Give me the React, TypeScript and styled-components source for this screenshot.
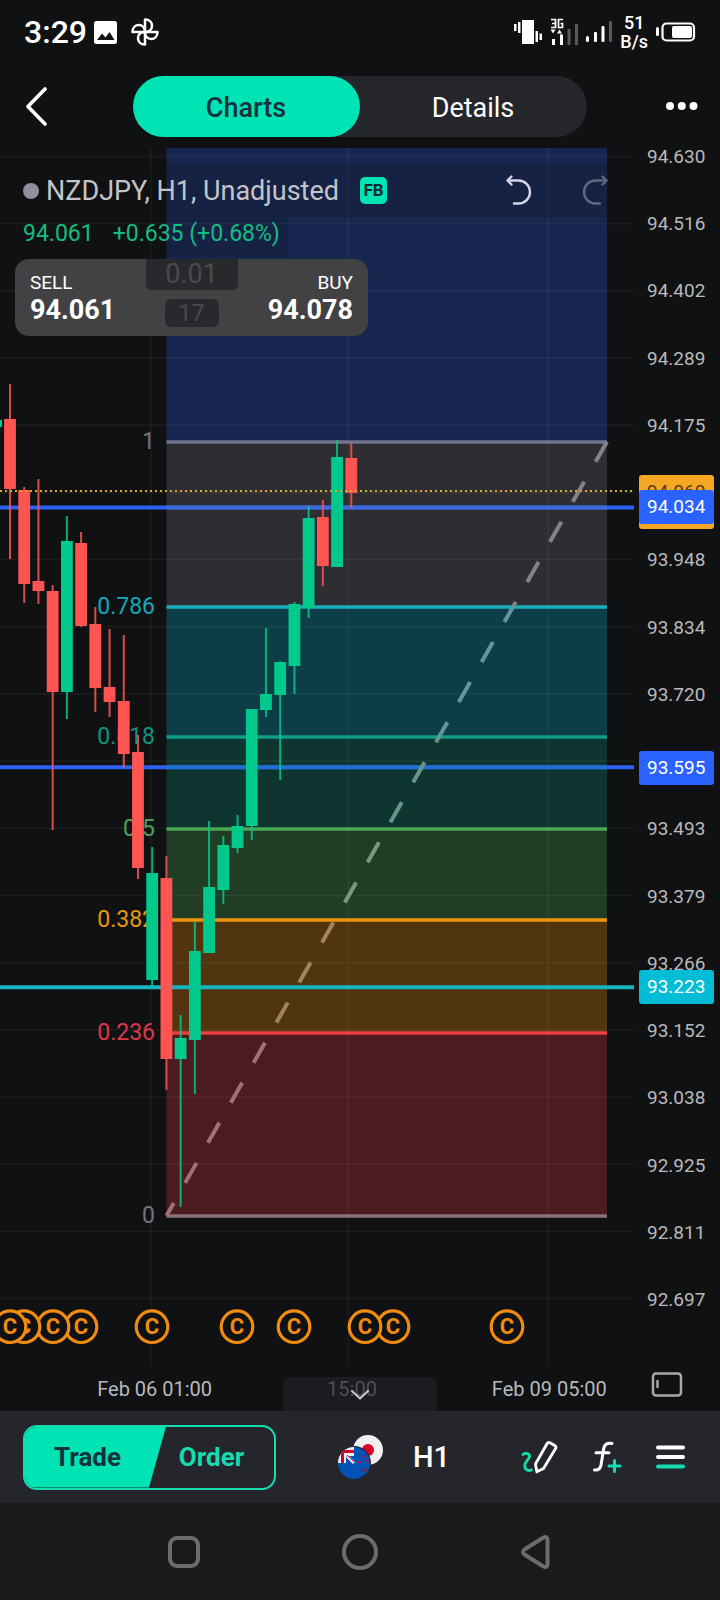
import React from "react";
import styled, { createGlobalStyle } from "styled-components";

const GlobalStyle = createGlobalStyle`
  *, *::before, *::after { box-sizing: border-box; }
  body {
    margin: 0;
    background: #101113;
    color: #fff;
    font-family: Roboto, "Liberation Sans", sans-serif;
  }
  button {
    margin: 0;
    padding: 0;
    border: 0;
    background: none;
    color: inherit;
    font: inherit;
    cursor: pointer;
  }
  svg { display: block; flex: none; }
`;

const Screen = styled.div`
  display: flex;
  flex-direction: column;
  min-height: 100vh;
  background: #101113;
`;

/* Status bar */

const StatusBar = styled.div`
  display: flex;
  align-items: center;
  justify-content: space-between;
  height: 64px;
  padding: 0 24px;
`;

const StatusGroup = styled.div<{ $gap: number }>`
  display: flex;
  align-items: center;
  gap: ${(p) => p.$gap}px;
`;

const Clock = styled.span`
  font-size: 32px;
  line-height: 36px;
  font-weight: 500;
  margin-right: -7px;
`;

const NetSpeed = styled.span`
  font-size: 18px;
  line-height: 19px;
  font-weight: 500;
  text-align: center;
`;

/* Header */

const Header = styled.header`
  display: flex;
  align-items: flex-start;
  justify-content: space-between;
  height: 80px;
  padding: 12px 22px 0 24px;
`;

const IconButton = styled.button<{ $height?: number; $width?: number }>`
  display: flex;
  align-items: center;
  width: ${(p) => (p.$width ? `${p.$width}px` : "auto")};
  height: ${(p) => p.$height ?? 60}px;
`;

const Tabs = styled.div`
  display: flex;
  width: 454px;
  height: 61px;
  border-radius: 31px;
  background: #25262c;
`;

const Tab = styled.button<{ $active?: boolean }>`
  flex: 1;
  padding-top: 2px;
  border-radius: 31px;
  background: ${(p) => (p.$active ? "#00e3b5" : "transparent")};
  color: ${(p) => (p.$active ? "#12323c" : "#fff")};
  font-size: 27px;
  font-weight: ${(p) => (p.$active ? 500 : 400)};
`;

/* Chart */

const ChartArea = styled.main`
  position: relative;
  display: flex;
`;

const Plot = styled.div`
  flex: 1;
  min-width: 0;

  svg { width: 100%; height: 1221px; }
`;

const PriceAxis = styled.div`
  position: relative;
  display: flex;
  flex-direction: column;
  justify-content: space-between;
  width: 86px;
  height: 1168px;
  padding: 1px 0 0 13px;
  color: #b9b9bb;
  font-size: 19px;
  line-height: 24px;
`;

const PriceTag = styled.div<{ $top: number; $color: string; $height?: number }>`
  position: absolute;
  left: 5px;
  top: ${(p) => p.$top}px;
  width: 75px;
  height: ${(p) => p.$height ?? 34}px;
  padding: 5px 0 0 8px;
  border-radius: 3px;
  background: ${(p) => p.$color};
  color: ${(p) => (p.$height ? "#5a3c10" : "#fff")};
`;

const Legend = styled.div`
  position: absolute;
  top: 20px;
  left: 0;
  right: 86px;
`;

const LegendRow = styled.div`
  display: flex;
  align-items: center;
  height: 53px;
  margin-right: 26px;
  padding-left: 23px;
  background: rgba(16, 17, 19, 0.17);
`;

const Dot = styled.span`
  width: 16px;
  height: 16px;
  margin-right: 7px;
  border-radius: 50%;
  background: #8f919e;
`;

const SymbolName = styled.span`
  color: #c3c4c9;
  font-size: 27px;
  line-height: 32px;
`;

const Badge = styled.span`
  width: 27px;
  height: 27px;
  margin-left: 21px;
  border-radius: 5px;
  background: #00e3b5;
  color: #0a2a30;
  font-size: 17px;
  line-height: 27px;
  font-weight: 700;
  text-align: center;
`;

const HistoryButtons = styled.div`
  display: flex;
  gap: 50px;
  margin: 0 -1px 0 auto;
`;

const Quote = styled.div`
  display: inline-flex;
  gap: 19px;
  height: 40px;
  padding: 3px 8px 0 23px;
  background: rgba(16, 17, 19, 0.17);
  color: #12bd82;
  font-size: 23px;
  line-height: 28px;
`;

const OrderTicket = styled.div`
  position: absolute;
  top: 115px;
  left: 15px;
  display: flex;
  justify-content: space-between;
  width: 353px;
  height: 77px;
  border-radius: 14px;
  background: #424245;
`;

const Side = styled.button<{ $end?: boolean }>`
  display: flex;
  flex-direction: column;
  align-items: ${(p) => (p.$end ? "flex-end" : "flex-start")};
  width: 120px;
  padding: 12px 15px 0;
`;

const SideLabel = styled.span`
  font-size: 19px;
  line-height: 24px;
`;

const SidePrice = styled.span`
  font-size: 27px;
  line-height: 30px;
  font-weight: 700;
`;

const TicketMiddle = styled.div`
  display: flex;
  flex-direction: column;
  align-items: center;
  gap: 9px;
  color: #4a4a4d;
`;

const Lot = styled.span`
  width: 92px;
  height: 31px;
  border-radius: 0 0 6px 6px;
  background: #28292c;
  font-size: 27px;
  line-height: 31px;
  text-align: center;
`;

const Spread = styled.span`
  width: 54px;
  height: 28px;
  border-radius: 6px;
  background: #28292c;
  font-size: 23px;
  line-height: 30px;
  text-align: center;
`;

const TimeAxis = styled.div`
  position: relative;
  display: flex;
  height: 46px;
  padding-left: 56px;
  color: #b9b9bb;
  font-size: 20px;
  line-height: 24px;
`;

const TimeLabel = styled.span`
  flex: 1;
  padding-top: 12px;
  text-align: center;
`;

const AxisModeButton = styled.button`
  display: flex;
  width: 72px;
  padding: 7px 0 0 3px;
`;

const DrawerHandle = styled.button`
  position: absolute;
  left: 50%;
  bottom: 0;
  display: flex;
  justify-content: center;
  width: 154px;
  height: 34px;
  margin-left: -77px;
  padding-top: 12px;
  border-radius: 6px 6px 0 0;
  background: rgba(32, 33, 38, 0.7);
`;

/* Toolbar */

const Toolbar = styled.div`
  display: flex;
  align-items: center;
  height: 92px;
  padding: 0 35px 0 23px;
  background: #25262c;
`;

const TradeSwitch = styled.div`
  display: flex;
  width: 253px;
  height: 65px;
  border: 2px solid #14dcb0;
  border-radius: 14px;
  overflow: hidden;
  font-size: 26px;
  font-weight: 700;
`;

const TradeButton = styled.button`
  width: 141px;
  margin-right: -17px;
  padding-right: 16px;
  background: #00e3b5;
  clip-path: polygon(0 0, 100% 0, 124px 100%, 0 100%);
  color: #12323c;
`;

const OrderButton = styled.button`
  flex: 1;
  color: #14dcb0;
`;

const FlagButton = styled.button`
  margin-left: 61px;
`;

const IntervalButton = styled.button`
  margin: 0 auto 0 28px;
  font-size: 29px;
  font-weight: 500;
`;

const Tools = styled.div`
  display: flex;
  align-items: center;
  gap: 34px;
`;

/* System navigation */

const SystemNav = styled.nav`
  display: flex;
  flex: 1;
  align-items: center;
  justify-content: center;
  gap: 136px;
  min-height: 97px;
  background: #1a1a1a;
`;

/* Data */

type Candle = [high: number, top: number, bottom: number, low: number, up: 0 | 1];

const candles: Candle[] = [
  [384, 419, 489, 559, 0],
  [487, 490, 584, 603, 0],
  [479, 581, 591, 604, 0],
  [585, 591, 692, 830, 0],
  [516, 541, 692, 719, 1],
  [532, 543, 626, 627, 0],
  [607, 624, 688, 712, 0],
  [629, 687, 702, 717, 0],
  [635, 701, 754, 768, 0],
  [735, 752, 868, 879, 0],
  [847, 873, 980, 986, 1],
  [856, 878, 1059, 1090, 0],
  [1015, 1038, 1059, 1207, 1],
  [922, 951, 1040, 1094, 1],
  [821, 887, 953, 953, 1],
  [836, 845, 890, 904, 1],
  [815, 826, 848, 853, 1],
  [709, 709, 826, 840, 1],
  [628, 694, 710, 717, 1],
  [661, 662, 695, 780, 1],
  [602, 604, 666, 694, 1],
  [506, 518, 608, 618, 1],
  [500, 517, 566, 586, 0],
  [440, 457, 567, 567, 1],
  [443, 458, 493, 508, 0],
];

const zones = [
  { from: 148, to: 442, fill: "#17264f", trend: "#828288" },
  { from: 442, to: 607, fill: "#2d2d32", trend: "#828288" },
  { from: 607, to: 737, fill: "#0c3e47", trend: "#6394a0" },
  { from: 737, to: 829, fill: "#0f3531", trend: "#66958a" },
  { from: 829, to: 920, fill: "#223d26", trend: "#7b977c" },
  { from: 920, to: 1033, fill: "#513510", trend: "#a48558" },
  { from: 1033, to: 1216, fill: "#4c1b20", trend: "#a06f78" },
];

const levels = [
  { y: 442, label: "1", line: "#70748e", text: "#73757d" },
  { y: 607, label: "0.786", line: "#1aaebc", text: "#14a9b9" },
  { y: 737, label: "0.618", line: "#0f9d87", text: "#0f957f" },
  { y: 829, label: "0.5", line: "#4aa852", text: "#4ea157" },
  { y: 920, label: "0.382", line: "#ea960f", text: "#ea960f" },
  { y: 1033, label: "0.236", line: "#ee3f3f", text: "#de3848" },
  { y: 1216, label: "0", line: "#88707e", text: "#73757d" },
];

const eventMarkers = [507, 393, 365, 294, 237, 152, 81, 53, 24, 10];

const prices = [
  "94.630", "94.516", "94.402", "94.289", "94.175", "", "93.948", "93.834", "93.720",
  "", "93.493", "93.379", "93.266", "93.152", "93.038", "92.925", "92.811", "92.697",
];

const UP = "#00c98b";
const DOWN = "#ff5552";

const trendOffset = (y: number) => (y - 148) / (1216 - 148);

function ChartDrawing() {
  return (
    <svg viewBox="0 144 634 1221" preserveAspectRatio="xMaxYMin slice" role="img" aria-label="NZDJPY hourly candles">
      <defs>
        <linearGradient id="trend" gradientUnits="userSpaceOnUse" x1="0" x2="0" y1="148" y2="1216">
          {zones.map((z) => (
            <React.Fragment key={z.from}>
              <stop offset={trendOffset(z.from)} stopColor={z.trend} />
              <stop offset={trendOffset(z.to)} stopColor={z.trend} />
            </React.Fragment>
          ))}
        </linearGradient>
      </defs>
      {zones.map((z) => (
        <rect key={z.from} x="166.5" y={z.from} width="440.5" height={z.to - z.from} fill={z.fill} />
      ))}
      <g stroke="#fff" strokeOpacity="0.05" strokeWidth="1.5">
        {prices.map((_, i) => (
          <line key={i} x1="0" x2="634" y1={156.5 + i * 67.18} y2={156.5 + i * 67.18} />
        ))}
        {[151, 348.5, 548].map((x) => (
          <line key={x} x1={x} x2={x} y1="148" y2="1365" />
        ))}
      </g>
      {levels.map((l) => (
        <g key={l.label}>
          <line x1="166.5" x2="607" y1={l.y} y2={l.y} stroke={l.line} strokeWidth="3.6" />
          <text x="155" y={l.y + 7} textAnchor="end" fontSize="23" fill={l.text}>{l.label}</text>
        </g>
      ))}
      <g strokeWidth="4">
        <path d="M0 507.5H634M0 767.3H634" stroke="#2b62f5" />
        <path d="M166.5 507.5H607" stroke="#3d6ad8" />
        <path d="M166.5 767.3H607" stroke="#236fcf" />
        <path d="M0 987.3H634" stroke="#16b4c0" />
      </g>
      <path d="M607 441.7L166.5 1215.7" stroke="url(#trend)" strokeWidth="4" strokeDasharray="23 23.1" />
      <rect x="0" y="420" width="2" height="7" fill={UP} />
      {candles.map(([high, top, bottom, low, up], i) => {
        const x = 10 + i * 14.22;
        return (
          <g key={i} fill={up ? UP : DOWN}>
            <rect x={x - 1} y={high} width="2" height={low - high} opacity="0.85" />
            <rect x={x - 5.9} y={top} width="11.8" height={bottom - top} />
          </g>
        );
      })}
      <path d="M0 491H632" stroke="#d9ab2c" strokeWidth="2" strokeDasharray="2 3" />
      {eventMarkers.map((x) => (
        <g key={x}>
          <circle cx={x} cy="1326.7" r="15.8" fill="#101113" stroke="#f28c0f" strokeWidth="3.2" />
          <text x={x} y="1333.5" textAnchor="middle" fontSize="22" fontWeight="700" fill="#f28c0f">C</text>
        </g>
      ))}
    </svg>
  );
}

function UndoIcon({ flip, color }: { flip?: boolean; color: string }) {
  return (
    <svg width="27" height="32" viewBox="0 0 27 32" fill="none" stroke={color} strokeWidth="2.4" strokeLinecap="round" strokeLinejoin="round">
      <g transform={flip ? "translate(27 0) scale(-1 1)" : undefined}>
        <path d="M3 5.500H13.500a11.500 11.500 0 0 1 0 23H9" />
        <path d="M6.500 1.500L2.500 5.500L6.500 9.500" />
      </g>
    </svg>
  );
}

function FlagPair() {
  return (
    <svg width="48" height="48" viewBox="0 0 48 48">
      <clipPath id="nz"><circle cx="17" cy="30" r="16" /></clipPath>
      <circle cx="31" cy="17" r="15" fill="#f0f0f0" />
      <circle cx="31" cy="17" r="6" fill="#d80027" />
      <circle cx="17" cy="30" r="17" fill="#25262c" />
      <g clipPath="url(#nz)">
        <rect x="1" y="13" width="34" height="34" fill="#0052b4" />
        <path d="M1 14h16v9h-8v7H1z" fill="#f0f0f0" />
        <path d="M10 23l7 7" stroke="#f0f0f0" strokeWidth="3" />
        <path d="M1 18.500h16M5.500 14v16" stroke="#d80027" strokeWidth="3" />
        <path d="M10 22l7 7" stroke="#d80027" strokeWidth="1" />
        <g fill="#d80027">
          <circle cx="27" cy="23.500" r="1.300" /><circle cx="30.500" cy="28" r="1.300" />
          <circle cx="22.500" cy="29" r="1.300" /><circle cx="27" cy="37" r="1.500" />
        </g>
      </g>
    </svg>
  );
}

export default function App() {
  return (
    <Screen>
      <GlobalStyle />
      <StatusBar>
        <StatusGroup $gap={14}>
          <Clock>3:29</Clock>
          <svg width="23" height="23" viewBox="0 0 23 23">
            <rect width="23" height="23" rx="2.500" fill="#fff" />
            <path d="M3 19l5-6.500 3.500 4 4-5.500 5 8z" fill="#101113" />
          </svg>
          <svg width="28" height="28" viewBox="0 0 28 28" fill="none" stroke="#fff" strokeWidth="2.500" strokeLinejoin="round">
            {[0, 90, 180, 270].map((a) => (
              <path key={a} transform={`rotate(${a} 14 14)`} d="M14 14V1.500c4.500 0 7 3 7 6.300 0 3.600-3 6.200-7 6.200z" />
            ))}
          </svg>
        </StatusGroup>
        <StatusGroup $gap={8}>
          <svg width="28" height="24" viewBox="0 0 28 24" fill="#fff">
            <path d="M8 0h12v24H8zM4 2h2.500v11H4zM0 4h2.500v7H0zM21.500 11H24v11h-2.500zM25.500 13.500H28v6.500h-2.500z" />
          </svg>
          <svg width="28" height="28" viewBox="0 0 28 28">
            <path d="M1 1.500h4.500v8H1M2 5.500h3.500M13 1.500H8.500v8H12.500v-4H10.500" fill="none" stroke="#fff" strokeWidth="1.700" />
            <path d="M.500 11.500h5L3 15.500zM7 15.500h5l-2.500-4zM2 21h3v6H2zM10 16.500h3V27h-3z" fill="#fff" />
            <path d="M17.500 11h3v16h-3zM25 6h3v21h-3z" fill="#5a5a5c" />
          </svg>
          <svg width="26" height="22" viewBox="0 0 26 22">
            <rect x="0" y="15" width="3" height="6" rx="1.500" fill="#fff" />
            <rect x="8" y="11" width="3" height="10" rx="1" fill="#fff" />
            <rect x="15.500" y="5" width="3" height="16" rx="1" fill="#fff" />
            <rect x="23" y="0" width="3" height="21" rx="1" fill="#5a5a5c" />
          </svg>
          <NetSpeed>51<br />B/s</NetSpeed>
          <svg width="40" height="20" viewBox="0 0 40 20">
            <rect x="0" y="5" width="3" height="9" rx="1.500" fill="#fff" />
            <rect x="6.500" y="1.500" width="31.500" height="17" rx="4" fill="none" stroke="#fff" strokeWidth="2.200" />
            <rect x="16" y="4" width="20" height="12" rx="2" fill="#fff" />
          </svg>
        </StatusGroup>
      </StatusBar>

      <Header>
        <IconButton aria-label="Back" $width={29}>
          <svg width="25" height="40" viewBox="0 0 25 40" fill="none" stroke="#fff" strokeWidth="3.600" strokeLinecap="round" strokeLinejoin="round">
            <path d="M21 3L4 20.500L21 38" />
          </svg>
        </IconButton>
        <Tabs role="tablist">
          <Tab role="tab" aria-selected="true" $active>Charts</Tab>
          <Tab role="tab" aria-selected="false">Details</Tab>
        </Tabs>
        <IconButton aria-label="More">
          <svg width="32" height="8" viewBox="0 0 32 8" fill="#fff">
            <circle cx="4" cy="4" r="4" /><circle cx="15.800" cy="4" r="4" /><circle cx="27.500" cy="4" r="4" />
          </svg>
        </IconButton>
      </Header>

      <ChartArea>
        <Plot><ChartDrawing /></Plot>
        <PriceAxis>
          {prices.map((p, i) => <span key={i}>{p || "\u00a0"}</span>)}
          <PriceTag $top={331} $height={54} $color="#f5a623">94.060</PriceTag>
          <PriceTag $top={346} $color="#2962ff">94.034</PriceTag>
          <PriceTag $top={607} $color="#2962ff">93.595</PriceTag>
          <PriceTag $top={826} $color="#00bcd4">93.223</PriceTag>
        </PriceAxis>
        <Legend>
          <LegendRow>
            <Dot />
            <SymbolName>NZDJPY, H1, Unadjusted</SymbolName>
            <Badge>FB</Badge>
            <HistoryButtons>
              <IconButton aria-label="Undo" $height={32}><UndoIcon color="#d4d4e4" /></IconButton>
              <IconButton aria-label="Redo" $height={32}><UndoIcon flip color="#62677f" /></IconButton>
            </HistoryButtons>
          </LegendRow>
          <Quote><span>94.061</span><span>+0.635 (+0.68%)</span></Quote>
        </Legend>
        <OrderTicket>
          <Side><SideLabel>SELL</SideLabel><SidePrice>94.061</SidePrice></Side>
          <TicketMiddle><Lot>0.01</Lot><Spread>17</Spread></TicketMiddle>
          <Side $end><SideLabel>BUY</SideLabel><SidePrice>94.078</SidePrice></Side>
        </OrderTicket>
      </ChartArea>

      <TimeAxis>
        <TimeLabel>Feb 06 01:00</TimeLabel>
        <TimeLabel>15:00</TimeLabel>
        <TimeLabel>Feb 09 05:00</TimeLabel>
        <AxisModeButton aria-label="Axis mode">
          <svg width="32" height="26" viewBox="0 0 32 26" fill="none" stroke="#a9a9ad" strokeWidth="2.500">
            <rect x="2" y="1.500" width="28" height="22" rx="3" />
            <path d="M6.500 9v6" strokeLinecap="round" />
          </svg>
        </AxisModeButton>
        <DrawerHandle aria-label="Expand">
          <svg width="20" height="12" viewBox="0 0 20 12" fill="none" stroke="#c4c4ca" strokeWidth="2.200" strokeLinecap="round" strokeLinejoin="round">
            <path d="M2 2L10 9.500L18 2" />
          </svg>
        </DrawerHandle>
      </TimeAxis>

      <Toolbar>
        <TradeSwitch>
          <TradeButton>Trade</TradeButton>
          <OrderButton>Order</OrderButton>
        </TradeSwitch>
        <FlagButton aria-label="NZD JPY"><FlagPair /></FlagButton>
        <IntervalButton>H1</IntervalButton>
        <Tools>
          <IconButton aria-label="Draw">
            <svg width="38" height="34" viewBox="0 0 38 34" fill="none" strokeWidth="2.800" strokeLinecap="round" strokeLinejoin="round">
              <path d="M3 14.500c2.500-2 7-1 6.500 2-.500 3-4.500 5-4.700 9-.200 4 3 6 6.700 4.500" stroke="#14dcb0" />
              <path d="M27 3.700c.700-1.200 1.700-1.500 3-.900l5 2.900c1 .700 1.200 1.700.600 2.900L23.500 28.500l-6.700 3.300-1.300-7.800z" stroke="#fff" />
            </svg>
          </IconButton>
          <IconButton aria-label="Indicators">
            <svg width="30" height="34" viewBox="0 0 30 34" fill="none" strokeWidth="3" strokeLinecap="round">
              <path d="M20 3.500c-5-1-7.500 1-8.300 5L9 25c-.700 4-2.500 5.500-6.500 5M4 12.800h13" stroke="#fff" />
              <path d="M22.500 20.500v11M17 26h11" stroke="#14dcb0" />
            </svg>
          </IconButton>
          <IconButton aria-label="Menu">
            <svg width="29" height="24" viewBox="0 0 29 24" strokeWidth="4" strokeLinecap="round">
              <path d="M2 2.500h25M2 12h25" stroke="#fff" />
              <path d="M2 21.500h25" stroke="#14dcb0" />
            </svg>
          </IconButton>
        </Tools>
      </Toolbar>

      <SystemNav>
        <IconButton aria-label="Recent apps">
          <svg width="40" height="40" viewBox="0 0 40 40" fill="none" stroke="#6c6c6c" strokeWidth="4">
            <rect x="6" y="6" width="28" height="28" rx="7" />
          </svg>
        </IconButton>
        <IconButton aria-label="Home">
          <svg width="40" height="40" viewBox="0 0 40 40" fill="none" stroke="#6c6c6c" strokeWidth="4">
            <circle cx="20" cy="20" r="16" />
          </svg>
        </IconButton>
        <IconButton aria-label="Back">
          <svg width="40" height="40" viewBox="0 0 40 40" fill="none" stroke="#6c6c6c" strokeWidth="4" strokeLinejoin="round">
            <path d="M8.500 17.500L27 5.800c3-1.500 4.500-.500 4.500 2v24.400c0 2.500-1.500 3.500-4.500 2L8.500 22.500c-2-1.500-2-3.500 0-5z" />
          </svg>
        </IconButton>
      </SystemNav>
    </Screen>
  );
}
